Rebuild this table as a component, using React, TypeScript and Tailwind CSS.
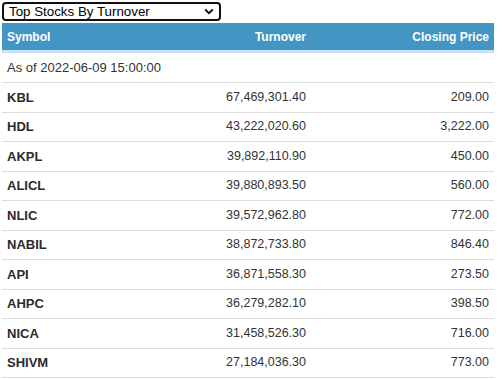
import React from "react";

const rows: [string, string, string][] = [
  ["KBL", "67,469,301.40", "209.00"],
  ["HDL", "43,222,020.60", "3,222.00"],
  ["AKPL", "39,892,110.90", "450.00"],
  ["ALICL", "39,880,893.50", "560.00"],
  ["NLIC", "39,572,962.80", "772.00"],
  ["NABIL", "38,872,733.80", "846.40"],
  ["API", "36,871,558.30", "273.50"],
  ["AHPC", "36,279,282.10", "398.50"],
  ["NICA", "31,458,526.30", "716.00"],
  ["SHIVM", "27,184,036.30", "773.00"],
];

export default function App() {
  return (
    <div className="w-[502px] h-[379px] overflow-hidden bg-white font-['Liberation_Sans',Arial,sans-serif]">
      <div className="pt-[2px] pl-[2px]">
        <div className="w-[219px] h-[19px] border-2 border-[#111] rounded-[4px] flex items-center justify-between pl-[5px] pr-[4px] text-[13.33px] leading-none text-black">
          <span>Top Stocks By Turnover</span>
          <svg width="10" height="7" viewBox="0 0 10 7" className="mr-[1px]">
            <polyline points="1.2,1.5 5,5.2 8.8,1.5" fill="none" stroke="#111" strokeWidth="1.9" />
          </svg>
        </div>
      </div>
      <div className="ml-[2px] mt-[2px] w-[492px]">
        <div className="grid grid-cols-[126px_183px_183px] h-[30px] bg-[#4396c4] border-b-[3px] border-[#c9e1f1] text-white font-bold text-[12px] items-center">
          <div className="pl-[5px]">Symbol</div>
          <div className="pr-[5px] text-right">Turnover</div>
          <div className="pr-[5px] text-right">Closing Price</div>
        </div>
        <div className="h-[30px] border-b border-[#dddddd] flex items-center pl-[5px] text-[13px] text-[#333]">
          As of 2022-06-09 15:00:00
        </div>
        {rows.map(([s, t, c]) => (
          <div
            key={s}
            className="grid grid-cols-[126px_183px_183px] h-[29.5px] border-b border-[#dddddd] items-center text-[12.5px] text-[#333]"
          >
            <div className="pl-[5px] font-bold text-[13px] text-[#2b2b2b]">{s}</div>
            <div className="pr-[5px] text-right">{t}</div>
            <div className="pr-[5px] text-right">{c}</div>
          </div>
        ))}
      </div>
    </div>
  );
}
